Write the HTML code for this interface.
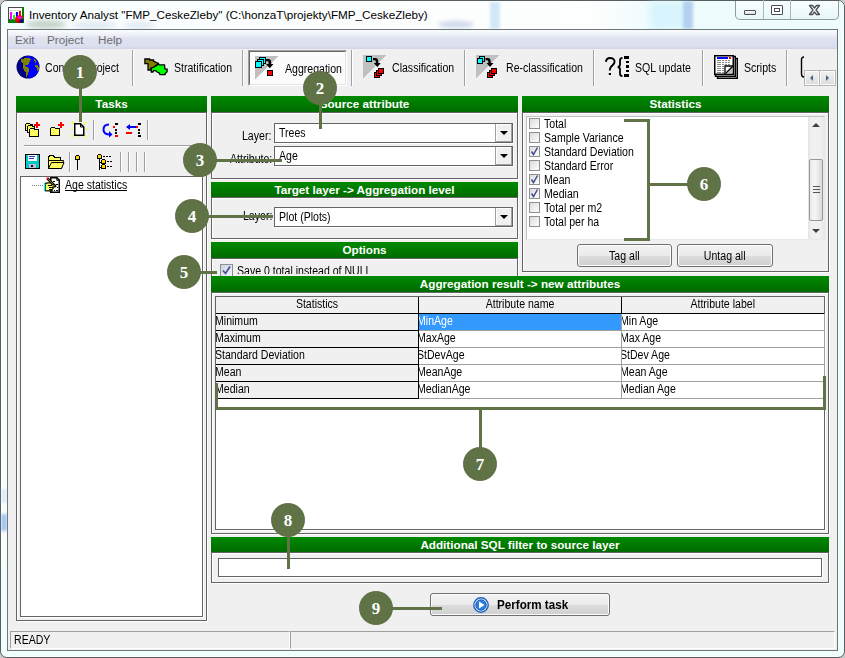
<!DOCTYPE html>
<html><head><meta charset="utf-8">
<style>
*{box-sizing:border-box}
html,body{margin:0;padding:0;width:845px;height:658px;overflow:hidden;background:#c9c9c9;font-family:"Liberation Sans",sans-serif;font-size:11px;color:#000}
.a{position:absolute}
#win{left:0;top:0;width:845px;height:658px;border:1px solid #555f60;border-radius:7px;background:linear-gradient(90deg,#fafcfc 0,#f6fbfb 50%,#effcfd 100%);box-shadow:inset 1px 1px 0 #fff,inset -1px -1px 0 #fff;overflow:hidden}
#client{left:7px;top:29px;width:831px;height:622px;border:1px solid #6c7878;background:#f0f0f0}
.t{position:absolute;white-space:pre;line-height:1}
.c{position:absolute;white-space:pre;line-height:1;font-size:12px;transform:scaleX(.88);transform-origin:0 0}
.cc{position:absolute;white-space:pre;line-height:1;font-size:12px;text-align:center}
.cc span{display:inline-block;transform:scaleX(.88);transform-origin:50% 0}
.hdr{position:absolute;height:16px;background:linear-gradient(#008a00,#006a00);color:#fff;font-weight:bold;font-size:11.7px;text-align:center;line-height:16px;white-space:pre;overflow:hidden}
.box{position:absolute;border:1px solid #646464;box-shadow:1px 1px 0 #fff,inset 1px 1px 0 #fff}
.sep{position:absolute;width:2px;border-left:1px solid #a0a0a0;border-right:1px solid #fff}
.combo{position:absolute;background:#fff;border:1px solid #646464;box-shadow:1px 1px 0 #fff}
.dd{position:absolute;right:0;top:0;bottom:0;width:17px;background:#f0f0f0;border-left:1px solid #a0a0a0;box-shadow:inset -1px -1px 0 #a0a0a0, inset 1px 1px 0 #fff}
.dd:after{content:"";position:absolute;left:4px;top:7px;border-left:4px solid transparent;border-right:4px solid transparent;border-top:4px solid #000}
.cb{position:absolute;width:11px;height:11px;border:1px solid #8e8f8f;background:linear-gradient(135deg,#dcdcdc,#fdfdfd)}
.btn{position:absolute;border:1px solid #707070;border-radius:3px;background:linear-gradient(#f2f2f2 0,#ebebeb 50%,#dddddd 51%,#cfcfcf 100%);box-shadow:inset 0 0 0 1px #fcfcfc;text-align:center;white-space:pre}
.ann{position:absolute;width:34px;height:34px;border-radius:50%;background:#5f7347;color:#fff;font-family:"Liberation Serif",serif;font-weight:bold;font-size:17px;text-align:center;line-height:36px}
.ln{position:absolute;background:#5f7347}
.grid{position:absolute}
.cell{position:absolute;white-space:pre;overflow:hidden;line-height:16px}
</style></head><body>
<svg width="0" height="0" style="position:absolute"><defs><pattern id="dy" width="2" height="2" patternUnits="userSpaceOnUse"><rect width="2" height="2" fill="#ffff00"/><rect width="1" height="1" fill="#ffffc0"/><rect x="1" y="1" width="1" height="1" fill="#ffffc0"/></pattern></defs></svg>
<div id="win" class="a"></div>
<!-- glass blobs -->
<div class="a" style="left:1px;top:1px;width:843px;height:28px;border-radius:6px 6px 0 0;background:linear-gradient(90deg,#f6fdfe 0,#fcfefe 30%,#fdfefe 70%,#eefbfd 78%,#effcfd 100%)"></div>
<div class="a" style="left:26px;top:20px;width:40px;height:9px;border-radius:50%;background:rgba(105,135,105,.35);filter:blur(2.5px)"></div>
<div class="a" style="left:72px;top:22px;width:44px;height:7px;border-radius:50%;background:rgba(150,170,205,.25);filter:blur(2.5px)"></div>
<div class="a" style="left:124px;top:22px;width:32px;height:7px;border-radius:50%;background:rgba(150,180,210,.25);filter:blur(2.5px)"></div>
<div class="a" style="left:438px;top:21px;width:36px;height:7px;border-radius:50%;background:rgba(120,150,195,.35);filter:blur(2px)"></div>
<div class="a" style="left:490px;top:2px;width:10px;height:27px;background:rgba(160,205,240,.45);filter:blur(1.5px)"></div>
<div class="a" style="left:650px;top:2px;width:34px;height:27px;background:rgba(200,240,252,.6);filter:blur(3px)"></div>
<div class="a" style="left:683px;top:1px;width:10px;height:28px;background:rgba(140,180,230,.6);filter:blur(1.5px)"></div>
<div class="a" style="left:1px;top:540px;width:843px;height:116px;border-radius:0 0 6px 6px;background:linear-gradient(rgba(239,253,253,0),#effdfd 50px)"></div>
<div class="a" style="left:1px;top:489px;width:6px;height:14px;background:rgba(150,200,240,.3);filter:blur(1.5px)"></div>
<div class="a" style="left:1px;top:514px;width:6px;height:17px;background:rgba(90,150,225,.55);filter:blur(1.5px)"></div>
<!-- corner bg -->
<div id="client" class="a"></div>

<!-- title icon -->
<svg class="a" style="left:8px;top:7px" width="16" height="16" viewBox="0 0 16 16">
<g shape-rendering="crispEdges">
<rect x="0" y="0" width="16" height="16" fill="#008000"/>
<rect x="0" y="0" width="14" height="13" fill="#4a4a4a"/>
<rect x="1" y="1" width="13" height="11" fill="#fff"/>
<rect x="1" y="3" width="12" height="1" fill="#dcdcdc"/><rect x="1" y="6" width="12" height="1" fill="#dcdcdc"/>
<rect x="2" y="5" width="2" height="8" fill="#ff00ff"/>
<rect x="5" y="8" width="2" height="5" fill="#00ff00"/>
<rect x="8" y="5" width="2" height="5" fill="#0000ff"/>
<rect x="11" y="4" width="2" height="5" fill="#ff0000"/>
</g>
<ellipse cx="11.5" cy="12.2" rx="4.4" ry="4" fill="#ff0000"/>
<path d="M8.5 9.8 Q11 8.5 15 10.2 L11.5 12.5 Z" fill="#ff00ff"/>
<path d="M11.5 12.5 L15.9 12.2 A4.4 4 0 0 1 12 16.2 Z" fill="#000090"/>
<path d="M11.5 12.5 L15 10.2 L15.9 12.2 Z" fill="#008000"/>
<path d="M8.5 15 Q10 16.4 12 16.2 L11.5 12.5 Z" fill="#b00000"/>
</svg>
<div class="t" style="left:29px;top:9px;font-size:11.7px;color:#000">Inventory Analyst "FMP_CeskeZleby" (C:\honzaT\projekty\FMP_CeskeZleby)</div>
<!-- caption buttons -->
<div class="a" style="left:735px;top:1px;width:104px;height:19px;border:1px solid #8d9ca0;border-top:none;border-radius:0 0 5px 5px;background:linear-gradient(#f8feff,#e8f6f8)"></div>
<div class="a" style="left:763px;top:0;width:1px;height:19px;background:#a9b8bb"></div>
<div class="a" style="left:790px;top:0;width:1px;height:19px;background:#a9b8bb"></div>
<div class="a" style="left:744px;top:10px;width:12px;height:5px;border:1px solid #4a4a58;border-radius:1px;background:linear-gradient(#fff,#d8d8d8)"></div>
<div class="a" style="left:771px;top:5px;width:12px;height:10px;border:1px solid #4a4a58;border-radius:1px;background:#fff"><div class="a" style="left:2px;top:2px;width:6px;height:4px;border:1px solid #4a4a58"></div></div>
<svg class="a" style="left:808px;top:4px" width="13" height="12" viewBox="0 0 13 12"><path d="M1.5 1.5 L4.5 1.5 L6.5 4 L8.5 1.5 L11.5 1.5 L8 6 L11.5 10.5 L8.5 10.5 L6.5 8 L4.5 10.5 L1.5 10.5 L5 6 Z" fill="#fff" stroke="#4a4a58" stroke-width="1.3" stroke-linejoin="round"/></svg>

<!-- menu bar -->
<div class="a" style="left:8px;top:30px;width:829px;height:19px;background:linear-gradient(#fbfcfe 0px,#eef0f8 5px,#dfe3f1 8px,#dadeef 17px,#d3d8ea 18px,#ced3e6 19px)"></div>
<div class="t" style="left:15px;top:34px;font-size:11.7px;color:#6d6d6d">Exit</div>
<div class="t" style="left:47px;top:34px;font-size:11.7px;color:#6d6d6d">Project</div>
<div class="t" style="left:98px;top:34px;font-size:11.7px;color:#6d6d6d">Help</div>

<!-- toolbar -->
<svg class="a" style="left:16px;top:55px" width="24" height="24" viewBox="0 0 24 24" shape-rendering="crispEdges">
<circle cx="12" cy="12" r="11.5" fill="#000080" shape-rendering="auto"/>
<path d="M12 1 A11 11 0 0 1 23 12 A11 11 0 0 1 12 23 L12 14 L8 10 L8 4 Z" fill="#0000ff" shape-rendering="auto"/>
<path d="M5 4 L11 3 L13 3 L15 4 L14 6 L13 9 L10 10 L9 10 L10 12 L13 13 L13 16 L12 18 L11 22 L10 22 L10 18 L8 15 L7 12 L7 8 L5 7 Z" fill="#808000"/>
<path d="M18 4 L20 6 L20 8 L19 8 Z M19 10 L22 10 L23 13 L22 17 L21 16 L21 13 L19 12 Z" fill="#808000"/>
</svg>
<div class="c" style="left:45px;top:62px">Connect project</div>
<div class="sep" style="left:132px;top:50px;height:36px"></div>

<svg class="a" style="left:143px;top:57px" width="26" height="20" viewBox="0 0 26 20">
<path d="M1.9 2 L6.6 2 L6.6 3 L10.5 3 L10.5 4 L15.3 6.5 L14.2 7.9 L11.1 10 L8 11.2 L7.4 13 L5 13 L5 6.7 L1.9 6.7 Z" fill="#808000" stroke="#000" stroke-width="1.3" stroke-linejoin="miter"/>
<path d="M15.3 6.5 L16.2 7.9 L21.5 7.9 L21.9 11.8 L24.1 12 L24.1 14.8 L22.4 16.3 L22 17.6 L17 17.6 L16.2 16 L13.8 14.8 L12.2 13.4 L10.6 13.7 L9.9 15 L8.3 15 L8.3 11.2 L11.1 10 L14.2 7.9 Z" fill="#00ff00" stroke="#000" stroke-width="1.3"/>
</svg>
<div class="c" style="left:174px;top:62px">Stratification</div>
<div class="sep" style="left:242px;top:50px;height:36px"></div>

<div class="a" style="left:248px;top:50px;width:99px;height:36px;border-top:1px solid #a0a0a0;border-left:1px solid #a0a0a0;border-right:1px solid #fff;border-bottom:1px solid #fff;">
 <div class="a" style="left:0;top:0;right:0;bottom:0;border-top:1px solid #696969;border-left:1px solid #696969;border-right:1px solid #e3e3e3;border-bottom:1px solid #e3e3e3;background-color:#f7f7f7;background-image:linear-gradient(45deg,#fff 25%,transparent 25%,transparent 75%,#fff 75%),linear-gradient(45deg,#fff 25%,transparent 25%,transparent 75%,#fff 75%);background-size:2px 2px;background-position:0 0,1px 1px"></div>
</div>
<svg class="a" style="left:255px;top:56px" width="24" height="24" viewBox="0 0 24 24" shape-rendering="crispEdges">
<polygon points="0,0 23,0 0,23" fill="#c0c0c0"/>
<rect x="4.5" y="1.5" width="6" height="6" fill="#00ffff" stroke="#000"/>
<rect x="2.5" y="3.5" width="6" height="6" fill="#00ffff" stroke="#000"/>
<rect x="0.5" y="5.5" width="6" height="6" fill="#00ffff" stroke="#000"/>
<path d="M11 3 L14 3 Q16.2 3.3 16.2 6 L16.2 8 L18.5 8 L14.8 12.2 L11 8 L13.6 8 L13.6 6.5 Q13.6 5.2 12.3 5.2 L11 5.2 Z" fill="#000" shape-rendering="auto"/>
<rect x="12.5" y="14.5" width="5" height="5" fill="#ff0000" stroke="#000"/>
</svg>
<div class="c" style="left:285px;top:63px">Aggregation</div>
<div class="sep" style="left:351px;top:50px;height:36px"></div>

<svg class="a" style="left:363px;top:55px" width="24" height="24" viewBox="0 0 24 24">
<g shape-rendering="crispEdges"><polygon points="0,0 23,0 0,23" fill="#c0c0c0"/>
<rect x="3.5" y="1.5" width="5" height="5" fill="#00ffff" stroke="#000"/>
<rect x="15.5" y="13.5" width="5" height="5" fill="#ff0000" stroke="#000"/>
<path d="M13.5 15.5 L15.5 15.5 L15.5 18.5 L18.5 18.5 L18.5 20.5 L13.5 20.5 Z" fill="#ff0000" stroke="#000"/>
<path d="M11.5 17.5 L13.5 17.5 L13.5 20.5 L16.5 20.5 L16.5 22.5 L11.5 22.5 Z" fill="#ff0000" stroke="#000"/></g>
<path d="M10 3 L13 3 Q15.2 3.3 15.2 6 L15.2 8 L17.8 8 L14.3 12 L10.8 8 L12.8 8 L12.8 6.5 Q12.8 5.2 11.5 5.2 L10 5.2 Z" fill="#000"/>
</svg>
<div class="c" style="left:392px;top:62px">Classification</div>
<div class="sep" style="left:464px;top:50px;height:36px"></div>

<svg class="a" style="left:476px;top:55px" width="24" height="24" viewBox="0 0 24 24">
<g shape-rendering="crispEdges"><polygon points="0,0 23,0 0,23" fill="#c0c0c0"/>
<rect x="3.5" y="1.5" width="5" height="5" fill="#00ffff" stroke="#000"/><rect x="1.5" y="3.5" width="5" height="5" fill="#00ffff" stroke="#000"/>
<rect x="15.5" y="13.5" width="5" height="5" fill="#ff0000" stroke="#000"/>
<path d="M13.5 15.5 L15.5 15.5 L15.5 18.5 L18.5 18.5 L18.5 20.5 L13.5 20.5 Z" fill="#ff0000" stroke="#000"/>
<path d="M11.5 17.5 L13.5 17.5 L13.5 20.5 L16.5 20.5 L16.5 22.5 L11.5 22.5 Z" fill="#ff0000" stroke="#000"/></g>
<path d="M9.5 3 L12.5 3 Q14.7 3.3 14.7 6 L14.7 8 L17.5 8 L14 12 L10.5 8 L12.3 8 L12.3 6.5 Q12.3 5.2 11 5.2 L9.5 5.2 Z" fill="#000"/>
</svg>
<div class="c" style="left:506px;top:62px">Re-classification</div>
<div class="sep" style="left:593px;top:50px;height:36px"></div>

<svg class="a" style="left:604px;top:55px" width="28" height="24" viewBox="0 0 28 24">
<path d="M1.9 6.8 C2.3 4 4 3 6 3 C8.6 3 10.6 4.6 10.6 6.8 C10.6 9 8.6 10 7 11.8 C6 13 5.8 14 5.8 15.5" fill="none" stroke="#000" stroke-width="1.9"/>
<rect x="4.8" y="18" width="2.2" height="2" fill="#000"/>
<path d="M18.5 2.8 C16.8 2.8 16 3.4 16 5.5 L16 9.5 C16 11 15.2 11.8 13.8 12 C15.2 12.2 16 13 16 14.5 L16 18.5 C16 20.6 16.8 21.2 18.5 21.2" fill="none" stroke="#000" stroke-width="1.8"/>
<g shape-rendering="crispEdges" fill="#000"><rect x="20" y="1" width="5" height="3"/><rect x="22" y="6" width="3" height="2"/><rect x="22" y="10" width="3" height="3"/><rect x="22" y="15" width="3" height="2"/><rect x="20" y="19" width="5" height="3"/></g>
</svg>
<div class="c" style="left:635px;top:62px">SQL update</div>
<div class="sep" style="left:702px;top:50px;height:36px"></div>

<svg class="a" style="left:714px;top:55px" width="25" height="25" viewBox="0 0 25 25">
<rect x="1" y="1" width="23" height="23" fill="#fff"/>
<path d="M21 3.5 L23.25 3.5 L23.25 23.25 L3.5 23.25 L3.5 21" fill="none" stroke="#000" stroke-width="1.5"/>
<path d="M19 1.5 L21.25 1.5 L21.25 21.25 L1.5 21.25 L1.5 19" fill="none" stroke="#000" stroke-width="1.5"/>
<rect x="0.75" y="0.75" width="18.5" height="18.5" fill="#fff" stroke="#000" stroke-width="1.5"/>
<g shape-rendering="crispEdges">
<rect x="3" y="2" width="11" height="2" fill="#0000ff"/><rect x="15" y="2" width="2" height="2" fill="#ff0000"/>
<g fill="#8a8a8a"><rect x="3" y="5" width="4" height="1"/><rect x="8" y="5" width="2" height="1"/><rect x="11" y="5" width="2" height="1"/><rect x="14" y="5" width="2" height="1"/>
<rect x="3" y="7" width="4" height="1"/><rect x="8" y="7" width="2" height="1"/><rect x="11" y="7" width="2" height="1"/><rect x="14" y="7" width="2" height="1"/>
<rect x="3" y="9" width="4" height="1"/><rect x="8" y="9" width="2" height="1"/><rect x="11" y="9" width="2" height="1"/><rect x="14" y="9" width="2" height="1"/>
<rect x="3" y="11" width="4" height="1"/><rect x="8" y="11" width="2" height="1"/>
<rect x="3" y="13" width="4" height="1"/><rect x="8" y="13" width="2" height="1"/>
<rect x="3" y="15" width="4" height="1"/><rect x="8" y="15" width="2" height="1"/>
<rect x="3" y="17" width="4" height="1"/><rect x="8" y="17" width="2" height="1"/></g>
</g>
<polygon points="18.5,11 18.5,18.5 11,18.5" fill="#c0c0c0"/>
<path d="M11 19 L11 11 L19 11" fill="none" stroke="#000" stroke-width="1.3"/>
<path d="M18.5 11.5 L11.5 18.5" stroke="#000" stroke-width="1.2"/>
</svg>
<div class="c" style="left:744px;top:62px">Scripts</div>
<div class="sep" style="left:786px;top:50px;height:36px"></div>
<svg class="a" style="left:799px;top:55px" width="7" height="25"><path d="M5 2 C3 2 2.5 3 2.5 5 L2.5 19 C2.5 21 3 22 5 22" fill="none" stroke="#000" stroke-width="1.4"/></svg>
<div class="a" style="left:804px;top:70px;width:16px;height:16px;border:1px solid #b5b5b5;background:linear-gradient(#f2f2f2,#dcdcdc);box-shadow:inset 0 0 0 1px #fbfbfb"></div>
<div class="a" style="left:819px;top:70px;width:17px;height:16px;border:1px solid #b5b5b5;background:linear-gradient(#f2f2f2,#dcdcdc);box-shadow:inset 0 0 0 1px #fbfbfb"></div>
<div class="a" style="left:810px;top:75px;width:0;height:0;border-top:3px solid transparent;border-bottom:3px solid transparent;border-right:3px solid #4d6185"></div>
<div class="a" style="left:826px;top:75px;width:0;height:0;border-top:3px solid transparent;border-bottom:3px solid transparent;border-left:3px solid #4d6185"></div>

<!-- Tasks panel -->
<div class="hdr" style="left:16px;top:96px;width:191px">Tasks</div>
<div class="box" style="left:16px;top:112px;width:191px;height:509px"></div>
<svg class="a" style="left:24px;top:121px" width="18" height="17" viewBox="0 0 18 17" shape-rendering="crispEdges">
<path d="M1.5 3.5 L2.5 2.5 L5.5 2.5 L6.5 3.5 L8.5 3.5 L8.5 9.5 L1.5 9.5 Z" fill="url(#dy)" stroke="#000"/>
<path d="M3.5 5.5 L4.5 4.5 L7.5 4.5 L8.5 5.5 L10.5 5.5 L10.5 11.5 L3.5 11.5 Z" fill="url(#dy)" stroke="#000"/>
<path d="M5.5 8.5 L6.5 7.5 L9.5 7.5 L10.5 8.5 L14.5 8.5 L14.5 15.5 L5.5 15.5 Z" fill="url(#dy)" stroke="#000"/>
<rect x="12" y="1" width="2" height="6" fill="#ff0000"/><rect x="10" y="3" width="6" height="2" fill="#ff0000"/>
</svg>
<svg class="a" style="left:49px;top:121px" width="16" height="17" viewBox="0 0 16 17" shape-rendering="crispEdges">
<path d="M1.5 7.5 L2.5 6.5 L5.5 6.5 L6.5 7.5 L10.5 7.5 L10.5 14.5 L1.5 14.5 Z" fill="url(#dy)" stroke="#000"/>
<rect x="11" y="1" width="2" height="6" fill="#ff0000"/><rect x="9" y="3" width="6" height="2" fill="#ff0000"/>
</svg>
<svg class="a" style="left:71px;top:121px" width="17" height="17" viewBox="0 0 17 17">
<g stroke="#ffff00" stroke-width="1.2"><path d="M1 1 L3 3"/><path d="M15 1 L13 3"/><path d="M1 16 L3 14"/><path d="M15 16 L13 14"/><path d="M0 8 L2 8"/><path d="M15 8 L17 8"/><path d="M8 0 L8 1"/><path d="M8 16 L8 17"/></g>
<path d="M3.75 2.75 L9.5 2.75 L12.75 6 L12.75 14.25 L3.75 14.25 Z" fill="#fff" stroke="#000" stroke-width="1.5"/>
<path d="M9.5 2.75 L9.5 6 L12.75 6" fill="none" stroke="#000" stroke-width="1"/>
</svg>
<div class="sep" style="left:93px;top:120px;height:20px"></div>
<svg class="a" style="left:102px;top:122px" width="17" height="16" viewBox="0 0 17 16">
<path d="M7 2.5 C3 2.5 1.5 5 1.5 7.5 C1.5 10.5 4 12.5 8 12.5" fill="none" stroke="#0000ff" stroke-width="2"/>
<path d="M7 9 L10.5 12.5 L7 15.5 Z" fill="#0000ff"/>
<g shape-rendering="crispEdges"><rect x="13" y="1" width="3" height="2" fill="#000"/><rect x="11" y="4" width="2" height="2" fill="#ff0000"/><rect x="13" y="7" width="2" height="2" fill="#000"/><rect x="13" y="10" width="2" height="2" fill="#000"/><rect x="13" y="13" width="3" height="2" fill="#ff0000"/></g>
</svg>
<svg class="a" style="left:125px;top:122px" width="17" height="16" viewBox="0 0 17 16" shape-rendering="crispEdges">
<rect x="4" y="4" width="7" height="2" fill="#0000ff"/><path d="M1 5 L5 2 L5 8 Z" fill="#0000ff" shape-rendering="auto"/>
<rect x="1" y="10" width="6" height="2" fill="#ff0000"/>
<rect x="13" y="1" width="3" height="2" fill="#000"/><rect x="11" y="4" width="2" height="2" fill="#ff0000"/><rect x="13" y="7" width="2" height="2" fill="#000"/><rect x="13" y="10" width="2" height="2" fill="#000"/><rect x="13" y="13" width="3" height="2" fill="#000"/>
</svg>
<div class="sep" style="left:147px;top:120px;height:20px"></div>
<div class="a" style="left:24px;top:145px;width:180px;height:2px;border-top:1px solid #a0a0a0;border-bottom:1px solid #fff"></div>
<svg class="a" style="left:25px;top:154px" width="16" height="16" viewBox="0 0 16 16" shape-rendering="crispEdges">
<rect x="0.5" y="0.5" width="14" height="14" rx="1" fill="#00c8c8" stroke="#000"/>
<rect x="3" y="1" width="9" height="6" fill="#fff"/><rect x="4" y="2" width="6" height="1" fill="#3030c0"/><rect x="4" y="4" width="5" height="1" fill="#3030c0"/>
<rect x="4" y="10" width="7" height="4" fill="#c0c0c0"/><rect x="6" y="11" width="2" height="2" fill="#000080"/>
</svg>
<svg class="a" style="left:47px;top:154px" width="18" height="16" viewBox="0 0 18 16" shape-rendering="crispEdges">
<path d="M1.5 3.5 L2.5 1.5 L6.5 1.5 L7.5 3.5 L13.5 3.5 L13.5 6.5 L1.5 6.5 Z" fill="url(#dy)" stroke="#000"/>
<path d="M1.5 14.5 L1.5 6.5 L16.5 6.5 L14.5 14.5 Z" fill="url(#dy)" stroke="#000" shape-rendering="auto"/>
<path d="M1.5 14.5 L4.5 8.5 L17 8.5 L14.5 14.5 Z" fill="url(#dy)" stroke="#000" shape-rendering="auto"/>
</svg>
<div class="sep" style="left:69px;top:152px;height:20px"></div>
<svg class="a" style="left:74px;top:154px" width="8" height="17" viewBox="0 0 8 17" shape-rendering="crispEdges">
<rect x="3" y="5" width="1" height="11" fill="#000"/><path d="M1.5 2.5 L2.5 1.5 L4.5 1.5 L5.5 2.5 L5.5 5.5 L1.5 5.5 Z" fill="#ffd800" stroke="#000"/>
</svg>
<svg class="a" style="left:97px;top:154px" width="18" height="17" viewBox="0 0 18 17" shape-rendering="crispEdges">
<rect x="2" y="4" width="1" height="12" fill="#000"/><rect x="2" y="8" width="3" height="1" fill="#000"/><rect x="2" y="13" width="3" height="1" fill="#000"/>
<path d="M0.5 1.5 L1.5 0.5 L3.5 0.5 L4.5 1.5 L4.5 4.5 L0.5 4.5 Z" fill="#ffd800" stroke="#000"/>
<path d="M4.5 6.5 L5.5 5.5 L7.5 5.5 L8.5 6.5 L8.5 9.5 L4.5 9.5 Z" fill="#ffd800" stroke="#000"/>
<path d="M4.5 11.5 L5.5 10.5 L7.5 10.5 L8.5 11.5 L8.5 14.5 L4.5 14.5 Z" fill="#ffd800" stroke="#000"/>
<g fill="#000"><rect x="6" y="2" width="2" height="1"/><rect x="9" y="2" width="2" height="1"/><rect x="12" y="2" width="2" height="1"/>
<rect x="10" y="7" width="2" height="1"/><rect x="13" y="7" width="2" height="1"/><rect x="10" y="12" width="2" height="1"/><rect x="13" y="12" width="2" height="1"/></g>
</svg>
<div class="sep" style="left:120px;top:152px;height:20px"></div>
<div class="sep" style="left:128px;top:152px;height:20px"></div>
<div class="sep" style="left:136px;top:152px;height:20px"></div>
<div class="sep" style="left:144px;top:152px;height:20px"></div>
<div class="a" style="left:20px;top:176px;width:183px;height:441px;background:#fff;border:1px solid #646464;box-shadow:1px 1px 0 #fff"></div>
<div class="a" style="left:32px;top:185px;width:11px;height:1px;border-top:1px dotted #808080"></div>
<svg class="a" style="left:43px;top:176px" width="18" height="18" viewBox="0 0 18 18">
<path d="M7.75 1.75 L14 1.75 L16.25 4 L16.25 16.25 L7.75 16.25 Z" fill="#fff" stroke="#000" stroke-width="1.5"/>
<path d="M13.8 1.75 L13.8 4.3 L16.25 4.3" fill="none" stroke="#000" stroke-width="1"/>
<g shape-rendering="crispEdges" fill="#000"><rect x="10" y="5" width="2" height="1"/><rect x="13" y="8" width="2" height="1"/><rect x="14" y="11" width="1" height="1"/><rect x="11" y="14" width="1" height="1"/><rect x="13" y="14" width="2" height="1"/></g>
<path d="M4.5 2.5 L12.8 10.8" stroke="#000" stroke-width="2.6"/>
<path d="M5.5 3.5 L12 10" stroke="#ffff00" stroke-width="1" stroke-dasharray="1 0.5"/>
<rect x="3.5" y="1.5" width="2" height="2" fill="#ff0000"/>
<path d="M2.2 7.3 L5 6.8 L8 7 L9 8.6 L12.3 9.2 L12.5 10.6 L10 10.9 L10.2 12.4 L9.2 13.4 L9.2 14.9 L5 14.9 L2.2 14.6 Z" fill="url(#dy)" stroke="#000" stroke-width="1.2"/>
<g shape-rendering="crispEdges" fill="#000"><rect x="5" y="9" width="4" height="1"/><rect x="6" y="11" width="4" height="1"/><rect x="6" y="13" width="3" height="1"/></g>
<rect x="0.8" y="7.3" width="1.4" height="7.2" fill="#00ffff"/>
</svg>
<div class="c" style="left:65px;top:179px">Age statistics</div><div class="a" style="left:65px;top:190px;width:62px;height:1px;background:#000"></div>

<!-- Source attribute -->
<div class="hdr" style="left:211px;top:96px;width:307px">Source attribute</div>
<div class="box" style="left:211px;top:112px;width:307px;height:67px"></div>
<div class="c" style="left:242px;top:130px">Layer:</div>
<div class="combo" style="left:274px;top:123px;width:239px;height:20px"><div class="c" style="left:4px;top:3px">Trees</div><div class="dd"></div></div>
<div class="c" style="left:230px;top:153px">Attribute:</div>
<div class="combo" style="left:274px;top:146px;width:239px;height:20px"><div class="c" style="left:4px;top:3px">Age</div><div class="dd"></div></div>

<!-- Target layer -->
<div class="hdr" style="left:211px;top:182px;width:307px;height:15px;line-height:15px">Target layer -&gt; Aggregation level</div>
<div class="box" style="left:211px;top:197px;width:307px;height:42px"></div>
<div class="c" style="left:243px;top:210px">Layer:</div>
<div class="combo" style="left:274px;top:207px;width:239px;height:20px"><div class="c" style="left:4px;top:3px">Plot (Plots)</div><div class="dd"></div></div>

<!-- Options -->
<div class="hdr" style="left:211px;top:242px;width:307px">Options</div>
<div class="box" style="left:211px;top:258px;width:307px;height:30px"></div>
<div class="a" style="left:220px;top:264px;width:13px;height:13px;border:1px solid #8e8f8f;background:linear-gradient(135deg,#c9d1e2,#f2f4f9)"></div>
<svg class="a" style="left:222px;top:266px" width="9" height="9" viewBox="0 0 9 9"><path d="M1 4.5 L3.5 7.5 L8 0.5" fill="none" stroke="#404c8f" stroke-width="1.6"/></svg>
<div class="a" style="left:236px;top:260px;width:200px;height:14px;overflow:hidden"><div class="c" style="left:1px;top:5px">Save 0 total instead of NULL</div></div>

<!-- Statistics -->
<div class="hdr" style="left:522px;top:96px;width:307px">Statistics</div>
<div class="box" style="left:522px;top:112px;width:307px;height:160px"></div>
<div class="a" style="left:526px;top:116px;width:299px;height:124px;background:#fff;border:1px solid #828790;border-color:#bcc0c8 #dfe6ec #e3e9ef #bcc0c8"></div>
<div class="cb" style="left:529px;top:118px"></div><div class="c" style="left:544px;top:118px">Total</div>
<div class="cb" style="left:529px;top:132px"></div><div class="c" style="left:544px;top:132px">Sample Variance</div>
<div class="cb" style="left:529px;top:146px"></div><svg class="a" style="left:530px;top:147px" width="9" height="9" viewBox="0 0 9 9"><path d="M1.5 4.5 L3.5 7.5 L7.5 0.5" fill="none" stroke="#404c8f" stroke-width="1.5"/></svg><div class="c" style="left:544px;top:146px">Standard Deviation</div>
<div class="cb" style="left:529px;top:160px"></div><div class="c" style="left:544px;top:160px">Standard Error</div>
<div class="cb" style="left:529px;top:174px"></div><svg class="a" style="left:530px;top:175px" width="9" height="9" viewBox="0 0 9 9"><path d="M1.5 4.5 L3.5 7.5 L7.5 0.5" fill="none" stroke="#404c8f" stroke-width="1.5"/></svg><div class="c" style="left:544px;top:174px">Mean</div>
<div class="cb" style="left:529px;top:188px"></div><svg class="a" style="left:530px;top:189px" width="9" height="9" viewBox="0 0 9 9"><path d="M1.5 4.5 L3.5 7.5 L7.5 0.5" fill="none" stroke="#404c8f" stroke-width="1.5"/></svg><div class="c" style="left:544px;top:188px">Median</div>
<div class="cb" style="left:529px;top:202px"></div><div class="c" style="left:544px;top:202px">Total per m2</div>
<div class="cb" style="left:529px;top:216px"></div><div class="c" style="left:544px;top:216px">Total per ha</div>

<div class="a" style="left:808px;top:117px;width:16px;height:122px;background:linear-gradient(90deg,#e3e3e3,#f0f0f0 20%,#f0f0f0 80%,#e8e8e8)"></div>
<div class="a" style="left:812px;top:123px;width:0;height:0;border-left:4px solid transparent;border-right:4px solid transparent;border-bottom:4px solid #404040"></div>
<div class="a" style="left:812px;top:229px;width:0;height:0;border-left:4px solid transparent;border-right:4px solid transparent;border-top:4px solid #404040"></div>
<div class="a" style="left:809px;top:159px;width:14px;height:62px;border:1px solid #979797;border-radius:2px;background:linear-gradient(90deg,#e9e9e9,#f6f6f6 40%,#d9d9d9)"></div>
<div class="a" style="left:813px;top:186px;width:7px;height:7px;border-top:1px solid #555;border-bottom:1px solid #555"><div class="a" style="left:0;top:2px;width:7px;height:1px;background:#555"></div></div>
<div class="btn" style="left:577px;top:244px;width:95px;height:23px"></div><div class="cc" style="left:577px;width:95px;top:250px"><span>Tag all</span></div>
<div class="btn" style="left:677px;top:244px;width:96px;height:23px"></div><div class="cc" style="left:677px;width:96px;top:250px"><span>Untag all</span></div>

<!-- Aggregation result -->
<div class="hdr" style="left:211px;top:276px;width:618px">Aggregation result -&gt; new attributes</div>
<div class="box" style="left:211px;top:292px;width:618px;height:242px"></div>
<div class="a" style="left:215px;top:296px;width:610px;height:234px;background:#fff;border:1px solid #646464;box-shadow:1px 1px 0 #fff"></div>
<div class="a" style="left:216px;top:297px;width:608px;height:17px;background:#f0f0f0;border-bottom:1px solid #000"></div>
<div class="a" style="left:418px;top:297px;width:1px;height:17px;background:#000"></div>
<div class="a" style="left:621px;top:297px;width:1px;height:17px;background:#000"></div>
<div class="cc" style="left:216px;width:202px;top:298px"><span>Statistics</span></div>
<div class="cc" style="left:419px;width:202px;top:298px"><span>Attribute name</span></div>
<div class="cc" style="left:622px;width:202px;top:298px"><span>Attribute label</span></div>
<div class="a" style="left:216px;top:314px;width:203px;height:17px;background:#f0f0f0;border-bottom:1px solid #000;border-right:1px solid #000"></div><div class="a" style="left:216px;top:312px;width:200px;height:16px;overflow:hidden"><div class="c" style="left:-1px;top:3px">Minimum</div></div><div class="a" style="left:419px;top:314px;width:203px;height:17px;background:#3399ff;border-bottom:1px solid #a0a0a0;border-right:1px solid #a0a0a0"></div><div class="a" style="left:419px;top:312px;width:200px;height:16px;overflow:hidden"><div class="c" style="left:-2px;top:3px;color:#fff">MinAge</div></div><div class="a" style="left:622px;top:314px;width:203px;height:17px;background:#fff;border-bottom:1px solid #a0a0a0;border-right:1px solid #a0a0a0"></div><div class="a" style="left:622px;top:312px;width:200px;height:16px;overflow:hidden"><div class="c" style="left:-2px;top:3px">Min Age</div></div>
<div class="a" style="left:216px;top:331px;width:203px;height:17px;background:#f0f0f0;border-bottom:1px solid #000;border-right:1px solid #000"></div><div class="a" style="left:216px;top:329px;width:200px;height:16px;overflow:hidden"><div class="c" style="left:-1px;top:3px">Maximum</div></div><div class="a" style="left:419px;top:331px;width:203px;height:17px;background:#fff;border-bottom:1px solid #a0a0a0;border-right:1px solid #a0a0a0"></div><div class="a" style="left:419px;top:329px;width:200px;height:16px;overflow:hidden"><div class="c" style="left:-2px;top:3px;color:#000">MaxAge</div></div><div class="a" style="left:622px;top:331px;width:203px;height:17px;background:#fff;border-bottom:1px solid #a0a0a0;border-right:1px solid #a0a0a0"></div><div class="a" style="left:622px;top:329px;width:200px;height:16px;overflow:hidden"><div class="c" style="left:-2px;top:3px">Max Age</div></div>
<div class="a" style="left:216px;top:348px;width:203px;height:17px;background:#f0f0f0;border-bottom:1px solid #000;border-right:1px solid #000"></div><div class="a" style="left:216px;top:346px;width:200px;height:16px;overflow:hidden"><div class="c" style="left:-1px;top:3px">Standard Deviation</div></div><div class="a" style="left:419px;top:348px;width:203px;height:17px;background:#fff;border-bottom:1px solid #a0a0a0;border-right:1px solid #a0a0a0"></div><div class="a" style="left:419px;top:346px;width:200px;height:16px;overflow:hidden"><div class="c" style="left:-2px;top:3px;color:#000">StDevAge</div></div><div class="a" style="left:622px;top:348px;width:203px;height:17px;background:#fff;border-bottom:1px solid #a0a0a0;border-right:1px solid #a0a0a0"></div><div class="a" style="left:622px;top:346px;width:200px;height:16px;overflow:hidden"><div class="c" style="left:-2px;top:3px">StDev Age</div></div>
<div class="a" style="left:216px;top:365px;width:203px;height:17px;background:#f0f0f0;border-bottom:1px solid #000;border-right:1px solid #000"></div><div class="a" style="left:216px;top:363px;width:200px;height:16px;overflow:hidden"><div class="c" style="left:-1px;top:3px">Mean</div></div><div class="a" style="left:419px;top:365px;width:203px;height:17px;background:#fff;border-bottom:1px solid #a0a0a0;border-right:1px solid #a0a0a0"></div><div class="a" style="left:419px;top:363px;width:200px;height:16px;overflow:hidden"><div class="c" style="left:-2px;top:3px;color:#000">MeanAge</div></div><div class="a" style="left:622px;top:365px;width:203px;height:17px;background:#fff;border-bottom:1px solid #a0a0a0;border-right:1px solid #a0a0a0"></div><div class="a" style="left:622px;top:363px;width:200px;height:16px;overflow:hidden"><div class="c" style="left:-2px;top:3px">Mean Age</div></div>
<div class="a" style="left:216px;top:382px;width:203px;height:17px;background:#f0f0f0;border-bottom:1px solid #000;border-right:1px solid #000"></div><div class="a" style="left:216px;top:380px;width:200px;height:16px;overflow:hidden"><div class="c" style="left:-1px;top:3px">Median</div></div><div class="a" style="left:419px;top:382px;width:203px;height:17px;background:#fff;border-bottom:1px solid #a0a0a0;border-right:1px solid #a0a0a0"></div><div class="a" style="left:419px;top:380px;width:200px;height:16px;overflow:hidden"><div class="c" style="left:-2px;top:3px;color:#000">MedianAge</div></div><div class="a" style="left:622px;top:382px;width:203px;height:17px;background:#fff;border-bottom:1px solid #a0a0a0;border-right:1px solid #a0a0a0"></div><div class="a" style="left:622px;top:380px;width:200px;height:16px;overflow:hidden"><div class="c" style="left:-2px;top:3px">Median Age</div></div>


<!-- SQL filter -->
<div class="hdr" style="left:211px;top:537px;width:618px;height:15px;line-height:15px">Additional SQL filter to source layer</div>
<div class="box" style="left:211px;top:552px;width:618px;height:31px"></div>
<div class="a" style="left:218px;top:558px;width:604px;height:19px;background:#fff;border:1px solid #646464;box-shadow:1px 1px 0 #fff"></div>

<!-- Perform task -->
<div class="btn" style="left:430px;top:593px;width:180px;height:23px"></div>
<svg class="a" style="left:473px;top:597px" width="16" height="16" viewBox="0 0 16 16">
<circle cx="8" cy="8" r="7.2" fill="#fff" stroke="#1d5fc0" stroke-width="1.4"/>
<circle cx="8" cy="8" r="5.3" fill="#2f7de0" stroke="#0d4aa8" stroke-width="0.8"/>
<path d="M6 4.5 L11.5 8 L6 11.5 Z" fill="#fff"/>
</svg>
<div class="c" style="left:497px;top:599px;font-weight:bold;transform:scaleX(.97)">Perform task</div>

<!-- Status bar -->
<div class="a" style="left:10px;top:631px;width:280px;height:18px;border-top:1px solid #a0a0a0;border-left:1px solid #a0a0a0;border-bottom:1px solid #fff;border-right:1px solid #fff"></div>
<div class="a" style="left:290px;top:631px;width:545px;height:18px;border-top:1px solid #a0a0a0;border-left:1px solid #a0a0a0;border-bottom:1px solid #fff;border-right:1px solid #fff"></div>
<div class="c" style="left:14px;top:634px">READY</div>

<!-- annotations -->
<div class="ln" style="left:79px;top:88px;width:3px;height:34px"></div>
<div class="ln" style="left:319px;top:104px;width:3px;height:25px"></div>
<div class="ln" style="left:215px;top:159px;width:67px;height:3px"></div>
<div class="ln" style="left:207px;top:215px;width:66px;height:3px"></div>
<div class="ln" style="left:199px;top:271px;width:18px;height:3px"></div>
<div class="ln" style="left:624px;top:119px;width:26px;height:3px"></div>
<div class="ln" style="left:647px;top:119px;width:3px;height:122px"></div>
<div class="ln" style="left:624px;top:238px;width:26px;height:3px"></div>
<div class="ln" style="left:649px;top:183px;width:40px;height:3px"></div>
<div class="ln" style="left:216px;top:407px;width:610px;height:3px"></div>
<div class="ln" style="left:216px;top:383px;width:2px;height:26px"></div>
<div class="ln" style="left:823px;top:376px;width:3px;height:33px"></div>
<div class="ln" style="left:479px;top:409px;width:3px;height:40px"></div>
<div class="ln" style="left:287px;top:536px;width:3px;height:33px"></div>
<div class="ln" style="left:391px;top:607px;width:51px;height:3px"></div>
<div class="ann" style="left:63px;top:55px">1</div>
<div class="ann" style="left:303px;top:71px">2</div>
<div class="ann" style="left:183px;top:143px">3</div>
<div class="ann" style="left:175px;top:199px">4</div>
<div class="ann" style="left:167px;top:255px">5</div>
<div class="ann" style="left:687px;top:167px">6</div>
<div class="ann" style="left:463px;top:447px">7</div>
<div class="ann" style="left:271px;top:503px">8</div>
<div class="ann" style="left:359px;top:591px">9</div>
</body></html>
